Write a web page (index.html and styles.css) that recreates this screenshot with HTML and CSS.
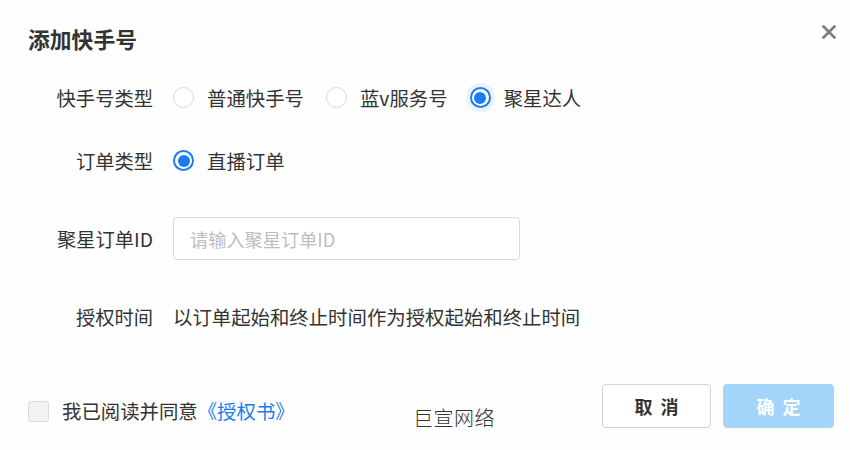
FILE: index.html
```html
<!DOCTYPE html>
<html lang="zh-CN">
<head>
<meta charset="utf-8">
<title>添加快手号</title>
<link rel="stylesheet" href="styles.css">
</head>
<body>
<div class="dialog">
  <div class="header">
    <h1 class="title">添加快手号</h1>
    <span class="close" aria-label="关闭">
      <svg width="14" height="14" viewBox="0 0 14 14"><path d="M1.5 1.5 L12.5 12.5 M12.5 1.5 L1.5 12.5" stroke="#7d7d7d" stroke-width="2.6" stroke-linecap="round"/></svg>
    </span>
  </div>
  <div class="form">
    <div class="row row-first">
      <div class="label">快手号类型</div>
      <div class="field radios">
        <label class="radio"><span class="dot"></span>普通快手号</label>
        <label class="radio"><span class="dot"></span>蓝v服务号</label>
        <label class="radio checked halo"><span class="dot"></span>聚星达人</label>
      </div>
    </div>
    <div class="row row-second">
      <div class="label">订单类型</div>
      <div class="field radios">
        <label class="radio checked"><span class="dot"></span>直播订单</label>
      </div>
    </div>
    <div class="row">
      <div class="label">聚星订单ID</div>
      <div class="field">
        <div class="input"><span class="placeholder">请输入聚星订单ID</span></div>
      </div>
    </div>
    <div class="row">
      <div class="label">授权时间</div>
      <div class="field text">以订单起始和终止时间作为授权起始和终止时间</div>
    </div>
  </div>
  <div class="footer">
    <label class="agree"><span class="checkbox"></span>我已阅读并同意<a class="link">《授权书》</a></label>
    <span class="brand">巨宣网络</span>
    <span></span>
    <div class="buttons">
      <button class="btn btn-cancel">取 消</button>
      <button class="btn btn-ok">确 定</button>
    </div>
  </div>
</div>
</body>
</html>
```
FILE: styles.css
```css
* { box-sizing: border-box; }
html, body { margin: 0; padding: 0; }
body {
  width: 850px;
  height: 450px;
  background: #fefefe;
  font-family: "Noto Sans CJK SC", "Noto Sans", "Liberation Sans", sans-serif;
  color: #333;
  overflow: hidden;
}
.dialog {
  width: 850px;
  height: 450px;
  display: flex;
  flex-direction: column;
}
.header {
  height: 76px;
  display: flex;
  justify-content: space-between;
  align-items: flex-start;
  padding: 26px 14px 0 28px;
}
.title {
  margin: 0;
  font-size: 21.8px;
  line-height: 26px;
  font-weight: 700;
  color: #333;
}
.close {
  margin-top: -1px;
  width: 14px;
  height: 14px;
  display: block;
}
.close svg { display: block; }
.form {
  display: flex;
  flex-direction: column;
  gap: 35px;
}
.row {
  display: flex;
  align-items: center;
  height: 43px;
}
.row-first { margin-bottom: -15px; }
.label {
  width: 153px;
  text-align: right;
  font-size: 19.3px;
  color: #333;
  flex: none;
}
.field {
  margin-left: 20px;
  font-size: 19.4px;
}
.radios {
  display: flex;
  gap: 22px;
}
.radio {
  display: flex;
  align-items: center;
  color: #333;
}
.dot {
  width: 21px;
  height: 21px;
  border: 1px solid #d6d6d6;
  border-radius: 50%;
  background: #fff;
  margin-right: 13px;
  position: relative;
  flex: none;
}
.radio.checked .dot {
  border: 2px solid #1a7cf2;
}
.radio.checked .dot::after {
  content: "";
  position: absolute;
  left: 2.5px;
  top: 2.5px;
  width: 12px;
  height: 12px;
  border-radius: 50%;
  background: #1a7cf2;
}
.radio.halo .dot {
  box-shadow: 0 0 0 4px #e9f2fe;
}
.input {
  width: 347px;
  height: 43px;
  border: 1px solid #d9d9d9;
  border-radius: 4px;
  background: #fff;
  display: flex;
  align-items: center;
  padding-left: 16px;
}
.placeholder {
  color: #bdbdbd;
  font-size: 18.2px;
}
.text {
  color: #333;
}
.footer {
  margin-top: auto;
  height: 44px;
  margin-bottom: 22px;
  padding: 0 16px 0 28px;
  display: grid;
  grid-template-columns: 385px auto 1fr auto;
  grid-template-rows: 44px;
  align-items: end;
}
.agree {
  display: flex;
  align-items: center;
  font-size: 19.4px;
  line-height: 28px;
  color: #333;
  margin-bottom: 3px;
}
.checkbox {
  width: 21px;
  height: 21px;
  border: 1px solid #dcdcdc;
  border-radius: 3px;
  background: #f2f2f2;
  margin-right: 13px;
  flex: none;
}
.link {
  color: #1a7cf2;
}
.brand {
  font-size: 20px;
  line-height: 28px;
  font-weight: 300;
  color: #333;
  margin-bottom: -4px;
  letter-spacing: 0.5px;
}
.buttons {
  display: flex;
  gap: 12px;
}
.btn {
  height: 44px;
  border-radius: 4px;
  font-family: inherit;
  font-size: 18px;
  font-weight: 700;
  letter-spacing: 2px;
  padding: 0 0 0 2px;
  cursor: pointer;
}
.btn-cancel {
  width: 109px;
  background: #fff;
  border: 1px solid #d2d2d2;
  color: #333;
}
.btn-ok {
  width: 111px;
  background: #a3d5fb;
  border: 1px solid #a3d5fb;
  color: #fff;
}
```
